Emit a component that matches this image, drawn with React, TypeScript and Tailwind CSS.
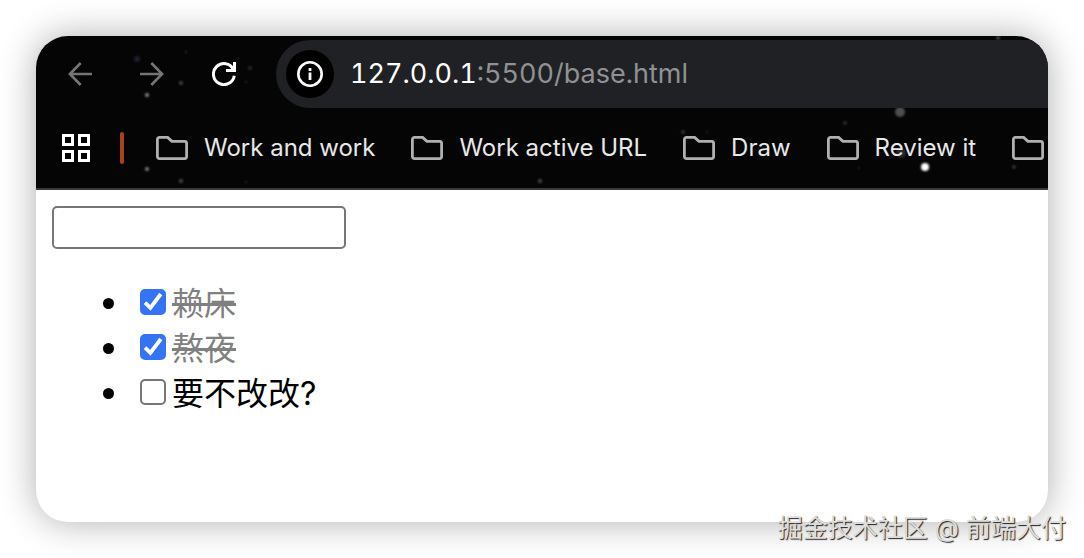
import { useState } from "react";

type Todo = { id: number; text: string; done: boolean };

const bookmarks = ["Work and work", "Work active URL", "Draw", "Review it", ""];

const stars = [
  { x: 101, y: 23, r: 3, fill: "#1b2330" },
  { x: 111, y: 59, r: 2, fill: "#8a8a8a" },
  { x: 145, y: 47, r: 2, fill: "#444444" },
  { x: 150, y: 16, r: 1, fill: "#3a3a3a" },
  { x: 214, y: 32, r: 2, fill: "#2c2c2c" },
  { x: 210, y: 46, r: 1, fill: "#2c2c2c" },
  { x: 111, y: 133, r: 2, fill: "#808080" },
  { x: 145, y: 145, r: 2, fill: "#4a4a4a" },
  { x: 210, y: 146, r: 1, fill: "#303030" },
  { x: 504, y: 145, r: 2, fill: "#4a4a4a" },
  { x: 647, y: 96, r: 2, fill: "#333333" },
  { x: 671, y: 96, r: 1, fill: "#333333" },
  { x: 809, y: 87, r: 2, fill: "#2a2a2a" },
  { x: 823, y: 132, r: 1, fill: "#333333" },
  { x: 864, y: 76, r: 5, fill: "#505050" },
  { x: 865, y: 117, r: 5, fill: "#2c2c2c" },
  { x: 889, y: 131, r: 4, fill: "#ffffff" },
  { x: 978, y: 131, r: 2, fill: "#333333" },
  { x: 962, y: 2, r: 2, fill: "#444444" },
];

function Stars() {
  return (
    <svg className="pointer-events-none absolute inset-0 size-full" aria-hidden="true">
      <defs>
        <filter id="glow" x="-50%" y="-50%" width="200%" height="200%">
          <feGaussianBlur stdDeviation="1" />
        </filter>
      </defs>
      {stars.map((s) => (
        <circle key={`${s.x}-${s.y}`} cx={s.x} cy={s.y} r={s.r} fill={s.fill} filter="url(#glow)" />
      ))}
    </svg>
  );
}

function Arrow({ back = false }: { back?: boolean }) {
  return (
    <svg width="24" height="24" viewBox="0 0 24 24" fill="none" stroke="#757575" strokeWidth="2.6" aria-hidden="true">
      <path d={back ? "M24 12H2M12.7 1 1.9 12l10.8 11" : "M0 12h22M11.3 1l10.8 11-10.8 11"} />
    </svg>
  );
}

function Reload() {
  return (
    <svg width="24" height="24" viewBox="0 0 24 24" fill="none" stroke="#ffffff" strokeWidth="3" aria-hidden="true">
      <path d="M22.3 13.8A10.5 10.5 0 1 1 21.3 7.3" />
      <path d="M22.5 0v8.5H14" />
    </svg>
  );
}

function Info() {
  return (
    <svg width="26" height="26" viewBox="0 0 26 26" fill="none" stroke="#ffffff" aria-hidden="true">
      <circle cx="13" cy="13" r="11.7" strokeWidth="2.6" />
      <path d="M13 11.5V19M13 7v3" strokeWidth="2.8" />
    </svg>
  );
}

function Folder() {
  return (
    <svg width="32" height="24" viewBox="0 0 32 24" fill="none" stroke="#b0b0b0" strokeWidth="2.8" strokeLinejoin="round" className="shrink-0" aria-hidden="true">
      <path d="M3.4 1.4h8.2L16 5.4h12.6a2 2 0 0 1 2 2v13.2a2 2 0 0 1-2 2H3.4a2 2 0 0 1-2-2V3.4a2 2 0 0 1 2-2z" />
    </svg>
  );
}

function Apps() {
  return (
    <svg width="28" height="28" viewBox="0 0 28 28" fill="none" stroke="#ffffff" strokeWidth="3" aria-hidden="true">
      <path d="M1.5 1.5h9v9h-9zM17.5 1.5h9v9h-9zM1.5 17.5h9v9h-9zM17.5 17.5h9v9h-9z" />
    </svg>
  );
}

function Checkbox({ checked, onChange }: { checked: boolean; onChange: () => void }) {
  return (
    <span className="mb-1 grid size-[26px]">
      <input
        type="checkbox"
        checked={checked}
        onChange={onChange}
        className="col-start-1 row-start-1 size-[26px] appearance-none rounded-[5px] border-2 border-[#767676] bg-white checked:border-[#3474f4] checked:bg-[#3474f4]"
      />
      {checked && (
        <svg viewBox="0 0 26 26" fill="none" stroke="#ffffff" strokeWidth="3.8" className="pointer-events-none col-start-1 row-start-1 size-[26px]" aria-hidden="true">
          <path d="M5 13.7l5.4 5.2L20.8 5" />
        </svg>
      )}
    </span>
  );
}

export default function App() {
  const [draft, setDraft] = useState("");
  const [todos, setTodos] = useState<Todo[]>([
    { id: 1, text: "赖床", done: true },
    { id: 2, text: "熬夜", done: true },
    { id: 3, text: "要不改改?", done: false },
  ]);

  const toggle = (id: number) =>
    setTodos((list) => list.map((t) => (t.id === id ? { ...t, done: !t.done } : t)));

  const add = () => {
    if (!draft.trim()) return;
    setTodos((list) => [...list, { id: Date.now(), text: draft, done: false }]);
    setDraft("");
  };

  return (
    <div className="relative flex min-h-screen flex-col bg-white p-9 font-['Inter','Noto_Sans_CJK_SC',sans-serif]">
      <div className="flex grow flex-col overflow-hidden rounded-[32px] bg-white shadow-[0_0_36px_rgba(0,0,0,0.32)]">
        <header className="relative border-b-2 border-[#3a3a3a] bg-[#050505]">
          <Stars />
          <div className="relative flex items-center pt-1 pl-8">
            <div className="flex gap-12">
              <button type="button" aria-label="Back"><Arrow back /></button>
              <button type="button" aria-label="Forward"><Arrow /></button>
              <button type="button" aria-label="Reload"><Reload /></button>
            </div>
            <div className="ml-10 flex h-[68px] grow items-center gap-4 rounded-l-full bg-[#202124] pl-2.5">
              <button type="button" aria-label="Site information" className="flex size-12 items-center justify-center rounded-full bg-black">
                <Info />
              </button>
              <p className="text-[27px] leading-9 text-[#909193] tabular-nums">
                <span className="text-white">127.0.0.1</span>:5500/base.html
              </p>
            </div>
          </div>
          <nav className="relative flex h-20 items-center overflow-hidden pl-[26px]">
            <button type="button" aria-label="Apps"><Apps /></button>
            <span className="ml-[30px] h-8 w-1 shrink-0 rounded-full bg-[#a7421f]" />
            <div className="ml-8 flex gap-9">
              {bookmarks.map((name) => (
                <a key={name} href="#" aria-label={name || "Folder"} className="flex items-center gap-4 text-2xl whitespace-nowrap text-[#e8e8e8]">
                  <Folder />
                  {name}
                </a>
              ))}
            </div>
          </nav>
        </header>

        <main className="flex flex-col items-start px-4 pt-4 text-[32px] leading-[45px] text-black">
          <input
            type="text"
            aria-label="New item"
            value={draft}
            onChange={(e) => setDraft(e.target.value)}
            onKeyDown={(e) => e.key === "Enter" && add()}
            className="h-[43px] w-[294px] rounded-[5px] border-2 border-[#767676] bg-white px-1 text-[26px]"
          />
          <ul className="mt-8 pl-[51px]">
            {todos.map((t) => (
              <li key={t.id} className="flex items-center">
                <span className="mr-[26px] size-[11px] rounded-full bg-black" />
                <label className="flex items-center gap-1.5">
                  <Checkbox checked={t.done} onChange={() => toggle(t.id)} />
                  <span className={t.done ? "text-[#808080] line-through" : ""}>{t.text}</span>
                </label>
              </li>
            ))}
          </ul>
        </main>
      </div>
      <p className="absolute right-[18px] bottom-3 text-[25px] leading-9 text-[#dedede] [text-shadow:1px_1px_1px_#222222]">
        掘金技术社区 @ 前端大付
      </p>
    </div>
  );
}
